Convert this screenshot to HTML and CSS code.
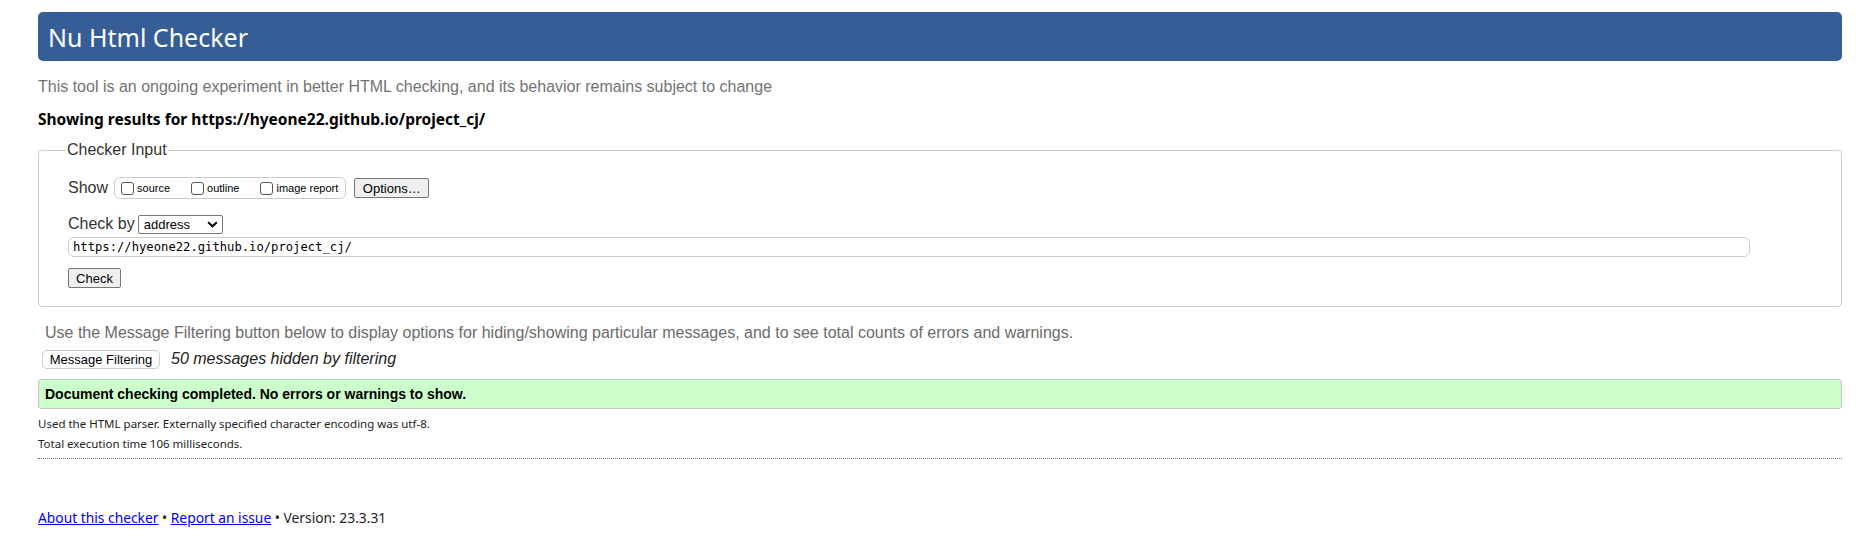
FILE: index.html
```html
<!DOCTYPE html>
<html lang="en">
<head>
<meta charset="utf-8">
<title>Nu Html Checker</title>
<link rel="stylesheet" href="styles.css">
</head>
<body>
<div class="page">
  <h1 class="banner">Nu Html Checker</h1>
  <p class="intro">This tool is an ongoing experiment in better HTML checking, and its behavior remains subject to change</p>
  <p class="showing">Showing results for https://hyeone22.github.io/project_cj/</p>
  <fieldset class="input-box">
    <legend class="legend">Checker Input</legend>
    <div class="row show-row">
      <span class="label">Show</span>
      <span class="opts">
        <label class="opt"><span class="cb"></span>source</label>
        <label class="opt"><span class="cb"></span>outline</label>
        <label class="opt"><span class="cb"></span>image report</label>
      </span>
      <span class="btn options">Options…</span>
    </div>
    <div class="row by-row">
      <span class="label">Check by</span>
      <span class="select">address<svg class="chev" width="11" height="7" viewBox="0 0 11 7"><path d="M1.2 1.2 L5.5 5.3 L9.8 1.2" fill="none" stroke="#000" stroke-width="2"/></svg></span>
    </div>
    <div class="url">https://hyeone22.github.io/project_cj/</div>
    <div class="row check-row"><span class="btn check">Check</span></div>
  </fieldset>
  <p class="filter-note">Use the Message Filtering button below to display options for hiding/showing particular messages, and to see total counts of errors and warnings.</p>
  <div class="filter-row">
    <span class="btn filter">Message Filtering</span>
    <em class="hidden-count">50 messages hidden by filtering</em>
  </div>
  <div class="success">Document checking completed. No errors or warnings to show.</div>
  <p class="meta meta-first">Used the HTML parser. Externally specified character encoding was utf-8.</p>
  <p class="meta">Total execution time 106 milliseconds.</p>
  <div class="rule"></div>
  <p class="footer"><a href="#">About this checker</a> • <a href="#">Report an issue</a> • Version: 23.3.31</p>
</div>
</body>
</html>
```

FILE: styles.css
```css
html, body {
  margin: 0;
  background: #fff;
}
body {
  font-family: "Liberation Sans", Arial, sans-serif;
  color: #000;
}
.page {
  padding: 12px 32px 0 38px;
}
.banner {
  margin: 0;
  height: 49px;
  display: flex;
  align-items: center;
  padding-left: 10px;
  background: #365d95;
  color: #fff;
  border-radius: 5px;
  font-family: "Noto Sans", sans-serif;
  font-weight: 400;
  font-size: 25px;
}
.intro {
  margin: 16px 0 0;
  font-size: 16px;
  line-height: 20px;
  color: #737373;
}
.showing {
  margin: 12px 0 0;
  font-family: "Noto Sans", sans-serif;
  font-weight: 700;
  font-size: 15.5px;
  line-height: 20px;
}
.input-box {
  margin: 11px 0 0;
  padding: 17px 29px 18px 29px;
  border: 1px solid #ccc;
  border-radius: 4px;
}
.legend {
  margin-left: -2px;
  padding: 0 1px;
  font-size: 16px;
  color: #333;
  line-height: 20px;
}
.row {
  display: flex;
  align-items: center;
}
.label {
  font-size: 16px;
  color: #333;
}
.show-row {
  height: 22px;
}
.opts {
  display: flex;
  align-items: center;
  gap: 21px;
  margin-left: 6px;
  box-sizing: border-box;
  height: 22px;
  padding: 0 7px 0 6px;
  border: 1px solid #ccc;
  border-radius: 6px;
}
.opt {
  display: flex;
  align-items: center;
  font-size: 11px;
  color: #000;
}
.cb {
  width: 13px;
  height: 13px;
  border: 1px solid #555;
  border-radius: 3px;
  margin-right: 3px;
  box-sizing: border-box;
}
.btn {
  display: inline-flex;
  align-items: center;
  justify-content: center;
  box-sizing: border-box;
  border: 1px solid #767676;
  border-radius: 2px;
  background: #efefef;
  font-size: 13px;
  color: #000;
}
.options {
  margin-left: 8px;
  width: 75px;
  height: 20px;
}
.by-row {
  margin-top: 15px;
  height: 20px;
}
.select {
  display: inline-flex;
  align-items: center;
  justify-content: space-between;
  box-sizing: border-box;
  margin-left: 3px;
  width: 85px;
  height: 19px;
  padding: 0 4px 0 5px;
  border: 1px solid #767676;
  border-radius: 2px;
  font-size: 13px;
}
.url {
  margin-top: 3px;
  box-sizing: border-box;
  width: 1682px;
  height: 20px;
  padding-left: 4px;
  display: flex;
  align-items: center;
  border: 1px solid #ccc;
  border-radius: 6px;
  font-family: "DejaVu Sans Mono", monospace;
  font-size: 12.2px;
}
.check-row {
  margin-top: 11px;
}
.check {
  width: 53px;
  height: 20px;
}
.filter-note {
  margin: 16px 0 0 7px;
  font-size: 16px;
  line-height: 20px;
  color: #6b6b6b;
}
.filter-row {
  margin: 6px 0 0 4px;
  height: 20px;
  display: flex;
  align-items: center;
  gap: 11px;
}
.filter {
  width: 118px;
  height: 19px;
  border: 1px solid #ccc;
  border-radius: 5px;
  background: #fff;
}
.hidden-count {
  font-size: 16px;
  color: #222;
}
.success {
  margin-top: 10px;
  box-sizing: border-box;
  height: 30px;
  padding-left: 6px;
  display: flex;
  align-items: center;
  background: #ccffcc;
  border: 1px solid #c8c8c8;
  border-radius: 3px;
  font-weight: 700;
  font-size: 14px;
}
.meta {
  margin: 2px 0 0;
  font-family: "Noto Sans", sans-serif;
  font-size: 11.5px;
  line-height: 18px;
  color: #222;
}
.meta-first {
  margin-top: 6px;
}
.rule {
  margin-top: 5px;
  border-top: 1px dotted #777;
}
.footer {
  margin: 49px 0 0;
  font-family: "Noto Sans", sans-serif;
  font-size: 13.8px;
  line-height: 20px;
  color: #222;
}
.footer a {
  color: #0000ee;
}
```
